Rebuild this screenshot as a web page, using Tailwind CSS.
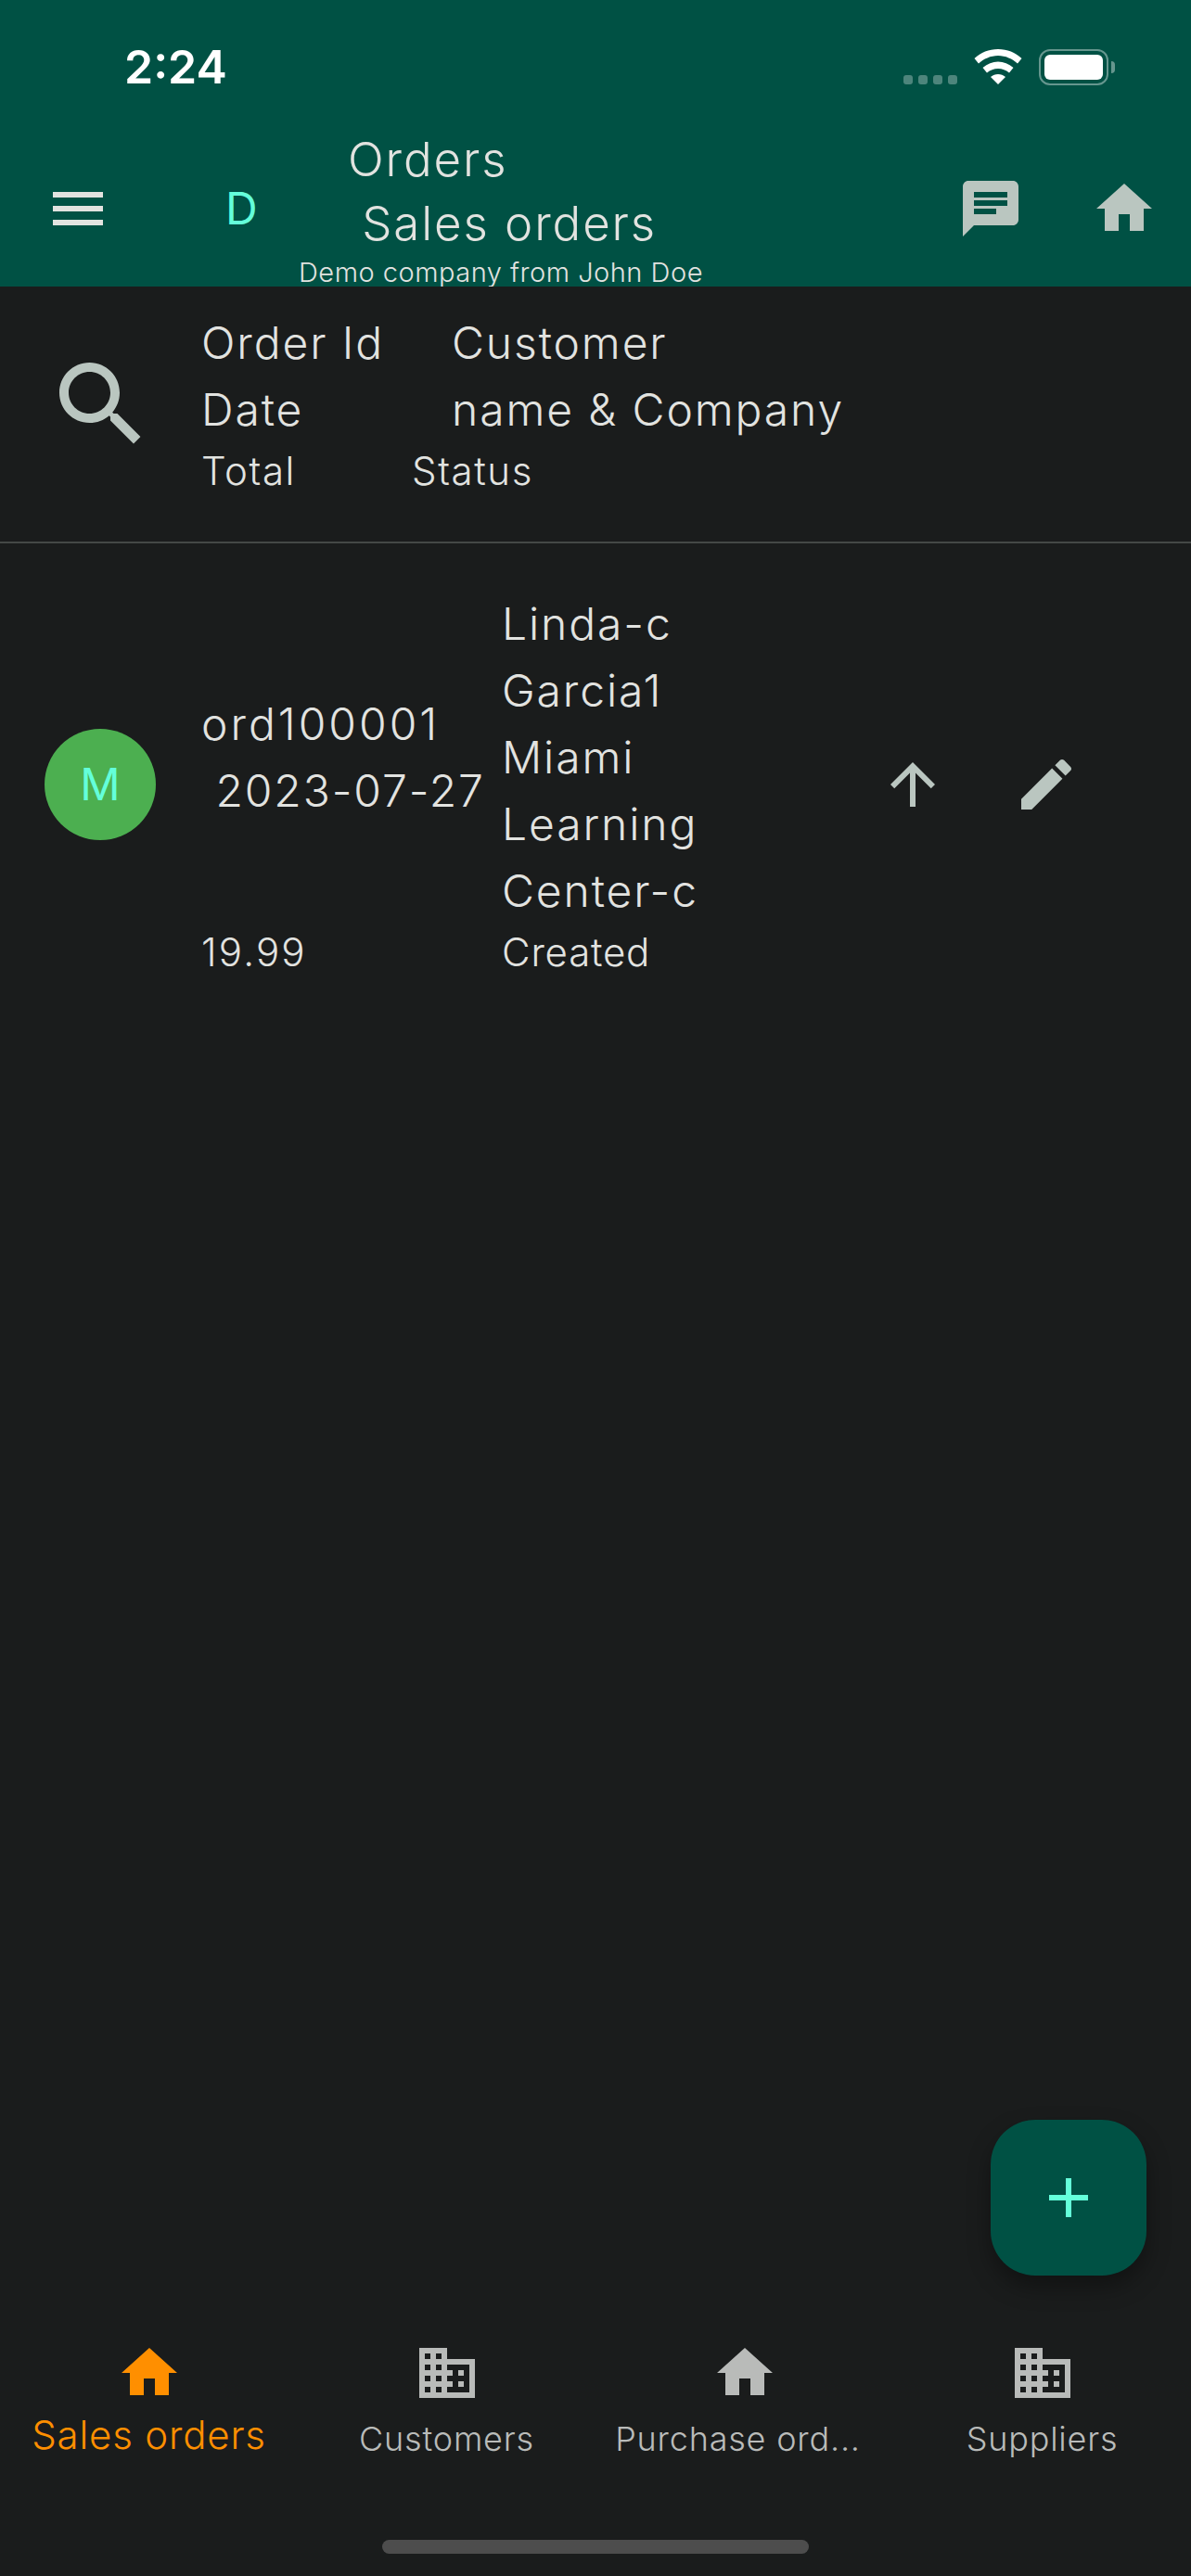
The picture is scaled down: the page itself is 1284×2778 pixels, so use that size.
<!DOCTYPE html>
<html lang="en">
  <head>
    <meta charset="UTF-8" />
    <meta name="viewport" content="width=device-width, initial-scale=1.0" />
    <title>Sales orders</title>
    <script src="https://cdn.jsdelivr.net/npm/@tailwindcss/browser@4"></script>
  </head>
  <body class="bg-[#1a1c1c] font-['Inter',sans-serif] font-light text-[#e2e3e0]">
    <div class="relative flex flex-col w-[1284px] h-[2778px] overflow-hidden">
      <!-- status bar + app bar -->
      <header class="h-[309px] shrink-0 overflow-hidden bg-[#005144]">
        <div class="flex items-start h-[137px]">
          <span class="ml-[134px] mt-[40px] text-[50px] leading-[64px] font-semibold text-white">2:24</span>
          <div class="flex items-end gap-[6px] ml-auto mt-[81px]">
            <span class="w-[10px] h-[10px] rounded-[3px] bg-white/30"></span>
            <span class="w-[10px] h-[10px] rounded-[3px] bg-white/30"></span>
            <span class="w-[10px] h-[10px] rounded-[3px] bg-white/30"></span>
            <span class="w-[10px] h-[10px] rounded-[3px] bg-white/30"></span>
          </div>
          <svg class="w-[52px] h-[38px] ml-[18px] mt-[53px]" viewBox="0 0 52 38" fill="white">
            <path d="M26 0C16 0 7.500 3.500 0.500 10L5 15.500C10.500 10.500 18 7 26 7S41.500 10.500 47 15.500L51.500 10C44.500 3.500 36 0 26 0Z" />
            <path d="M26 13.500C20 13.500 14.500 15.800 9.500 20L14 25.500C17.500 22.500 21.500 21 26 21S34.500 22.500 38 25.500L42.500 20C37.500 15.800 32 13.500 26 13.500Z" />
            <path d="M26 27C23 27 20.300 28 18 30L26 38L34 30C31.700 28 29 27 26 27Z" />
          </svg>
          <div class="flex items-center ml-[18px] mt-[53px] mr-[82px]">
            <div class="w-[75px] h-[39px] p-[4px] rounded-[12px] border-[2px] border-white/40">
              <div class="w-full h-full rounded-[6px] bg-white"></div>
            </div>
            <span class="w-[4px] h-[13px] ml-[3px] rounded-r-[4px] bg-white/40"></span>
          </div>
        </div>
        <div class="flex items-center h-[172px]">
          <svg class="w-[72px] h-[72px] ml-[48px] mt-[4px] shrink-0" viewBox="0 0 24 24" fill="#e2e3e0">
            <path d="M3 18h18v-2H3v2zm0-5h18v-2H3v2zm0-7v2h18V6H3z" />
          </svg>
          <span class="w-[30px] ml-[123px] mt-[4px] text-[48px] leading-[72px] font-normal text-[#64ffda]">D</span>
          <div class="self-start w-[530px] ml-[49px] text-[51px] leading-[69px] tracking-[1.9px]">
            <div class="pl-[53px]">Orders</div>
            <div class="pl-[52px] whitespace-pre"> Sales orders</div>
            <div class="mt-[4px] text-[29px] leading-[30px] tracking-[0.5px]">Demo company from John Doe</div>
          </div>
          <svg class="w-[72px] h-[72px] ml-auto mt-[4px]" viewBox="0 0 24 24" fill="#bac6c0">
            <path d="M20 2H4c-1.100 0-1.990.9-1.990 2L2 22l4-4h14c1.100 0 2-.9 2-2V4c0-1.100-.9-2-2-2zM6 9h12v2H6V9zm8 5H6v-2h8v2zm4-6H6V6h12v2z" />
          </svg>
          <svg class="w-[72px] h-[72px] ml-[72px] mr-[36px] mt-[4px]" viewBox="0 0 24 24" fill="#bac6c0">
            <path d="M10 20v-6h4v6h5v-8h3L12 3 2 12h3v8z" />
          </svg>
        </div>
      </header>

      <!-- column heading -->
      <section class="flex items-center h-[277px] pt-[26px] pb-[47px] pl-[49px] border-b-[2px] border-[#444846]">
        <svg class="w-[120px] h-[120px] shrink-0" viewBox="0 0 24 24" fill="#bac6c0">
          <path d="M15.500 14h-.79l-.28-.27C15.410 12.590 16 11.110 16 9.500 16 5.910 13.090 3 9.500 3S3 5.910 3 9.500 5.910 16 9.500 16c1.610 0 3.090-.59 4.230-1.570l.27.28v.79l5 4.990L20.490 19l-4.990-5zm-6 0C7.010 14 5 11.990 5 9.500S7.010 5 9.500 5 14 7.010 14 9.500 11.990 14 9.500 14z" />
        </svg>
        <div class="ml-[48px]">
          <div class="flex text-[48px] leading-[72px] tracking-[1.9px]">
            <div class="w-[270px]">Order Id<br />Date</div>
            <div>Customer<br />name &amp; Company</div>
          </div>
          <div class="flex text-[42px] leading-[60px] tracking-[1.6px]">
            <div class="w-[227px]">Total</div>
            <div>Status</div>
          </div>
        </div>
      </section>

      <!-- order row -->
      <section class="flex items-center pt-[49px] pl-[48px]">
        <div class="flex items-center justify-center w-[120px] h-[120px] rounded-full bg-[#4caf50] text-[48px] font-normal text-[#64ffda]">M</div>
        <div class="w-[730px] ml-[49px] pt-[2px]">
          <div class="flex items-center text-[48px] leading-[72px] tracking-[1.9px] whitespace-pre">
            <div class="w-[324px]"><span class="tracking-[3px]">ord100001</span><br /> 2023-07-27</div>
            <div>Linda-c<br />Garcia1<br />Miami<br />Learning<br />Center-c</div>
          </div>
          <div class="flex text-[42px] leading-[60px]">
            <div class="w-[324px] tracking-[2.2px]">19.99</div>
            <div class="tracking-[0.8px]">Created</div>
          </div>
        </div>
        <svg class="w-[72px] h-[72px] ml-[1px]" viewBox="0 0 24 24" fill="#bac6c0">
          <path d="M4 12l1.410 1.410L11 7.830V20h2V7.830l5.580 5.590L20 12l-8-8-8 8z" />
        </svg>
        <svg class="w-[72px] h-[72px] ml-[72px]" viewBox="0 0 24 24" fill="#bac6c0">
          <path d="M3 17.250V21h3.750L17.810 9.940l-3.750-3.750L3 17.250zM20.710 7.040c.39-.39.39-1.020 0-1.410l-2.340-2.340c-.39-.39-1.020-.39-1.410 0l-1.830 1.830 3.750 3.750 1.830-1.830z" />
        </svg>
      </section>

      <!-- add button -->
      <button class="absolute left-[1068px] top-[2286px] flex items-center justify-center w-[168px] h-[168px] rounded-[48px] bg-[#005144] shadow-[0_12px_24px_rgba(0,0,0,0.35)]">
        <svg class="w-[72px] h-[72px]" viewBox="0 0 24 24" fill="#64ffda">
          <path d="M19 13h-6v6h-2v-6H5v-2h6V5h2v6h6v2z" />
        </svg>
      </button>

      <!-- bottom navigation -->
      <nav class="grid grid-cols-4 h-[255px] mt-auto text-[#b9bbb9] text-[36px] leading-[48px] tracking-[0.8px]">
        <a class="flex flex-col items-center text-[#ff8f00]">
          <svg class="w-[72px] h-[72px]" viewBox="0 0 24 24" fill="currentColor"><path d="M10 20v-6h4v6h5v-8h3L12 3 2 12h3v8z" /></svg>
          <span class="mt-[7px] text-[42px] leading-[48px]">Sales orders</span>
        </a>
        <a class="flex flex-col items-center">
          <svg class="w-[72px] h-[72px]" viewBox="0 0 24 24" fill="currentColor"><path d="M12 7V3H2v18h20V7H12zM6 19H4v-2h2v2zm0-4H4v-2h2v2zm0-4H4V9h2v2zm0-4H4V5h2v2zm4 12H8v-2h2v2zm0-4H8v-2h2v2zm0-4H8V9h2v2zm0-4H8V5h2v2zm10 12h-8v-2h2v-2h-2v-2h2v-2h-2V9h8v10zm-2-8h-2v2h2v-2zm0 4h-2v2h2v-2z" /></svg>
          <span class="mt-[11px]">Customers</span>
        </a>
        <a class="flex flex-col items-center">
          <svg class="w-[72px] h-[72px]" viewBox="0 0 24 24" fill="currentColor"><path d="M10 20v-6h4v6h5v-8h3L12 3 2 12h3v8z" /></svg>
          <span class="mt-[11px] -ml-[14px]">Purchase ord...</span>
        </a>
        <a class="flex flex-col items-center">
          <svg class="w-[72px] h-[72px]" viewBox="0 0 24 24" fill="currentColor"><path d="M12 7V3H2v18h20V7H12zM6 19H4v-2h2v2zm0-4H4v-2h2v2zm0-4H4V9h2v2zm0-4H4V5h2v2zm4 12H8v-2h2v2zm0-4H8v-2h2v2zm0-4H8V9h2v2zm0-4H8V5h2v2zm10 12h-8v-2h2v-2h-2v-2h2v-2h-2V9h8v10zm-2-8h-2v2h2v-2zm0 4h-2v2h2v-2z" /></svg>
          <span class="mt-[11px]">Suppliers</span>
        </a>
      </nav>

      <!-- home indicator -->
      <div class="absolute left-[412px] top-[2739px] w-[460px] h-[15px] rounded-full bg-[#4d4d4d]"></div>
    </div>
  </body>
</html>
